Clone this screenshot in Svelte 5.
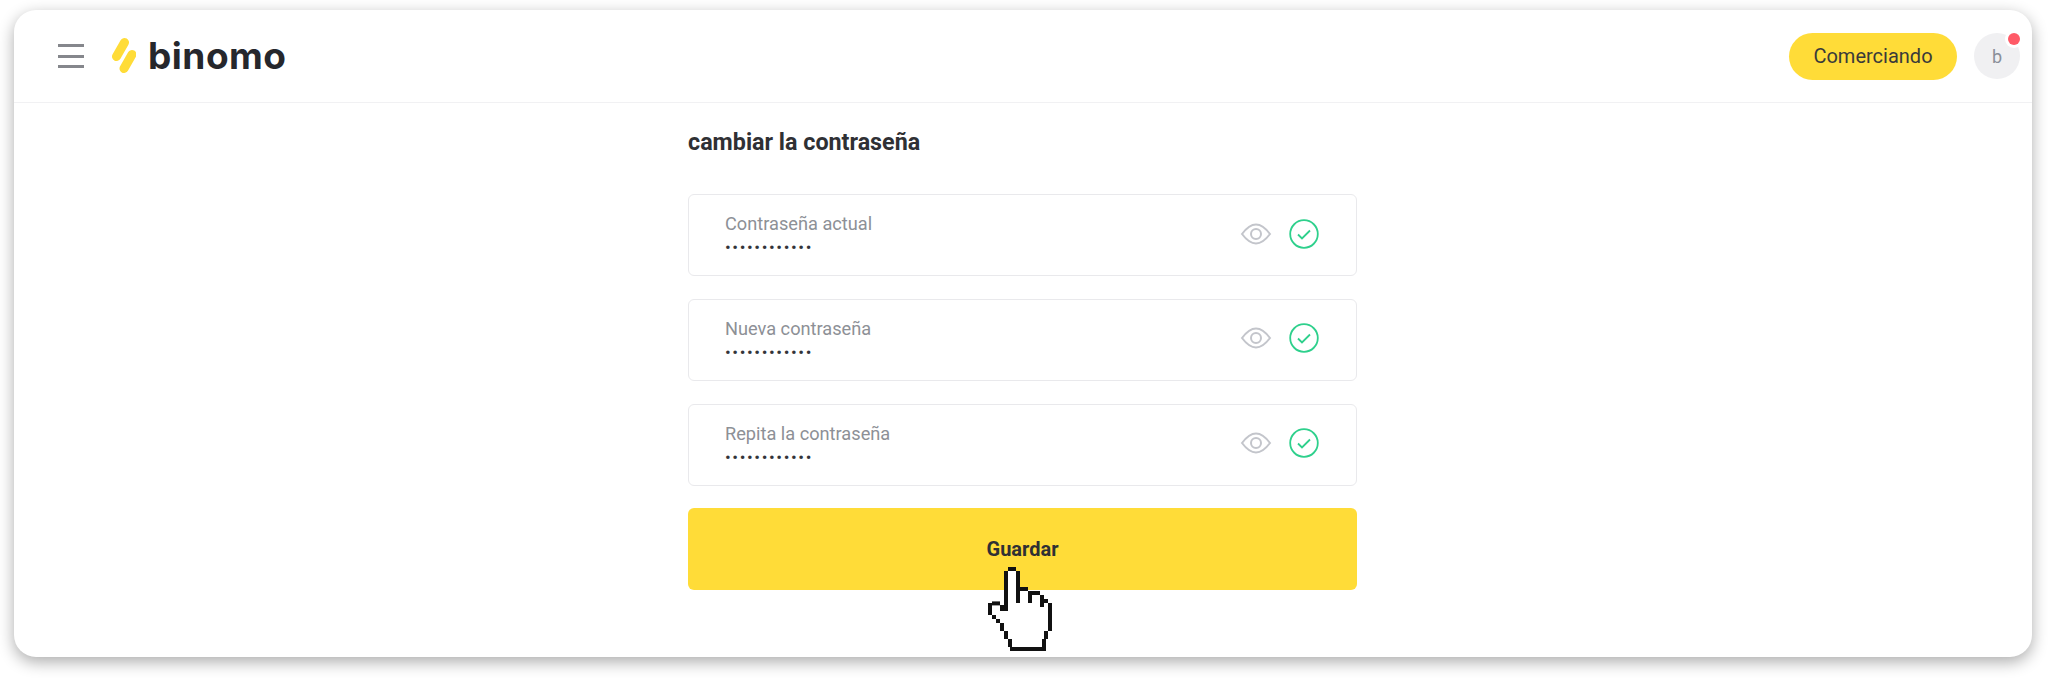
<script>
  const fields = ['Contraseña actual', 'Nueva contraseña', 'Repita la contraseña'];

  // cursor drawn on a 4px grid: [x, y, w, h]
  const cursor = [
    [5, 0, 2, 1], [4, 1, 1, 10], [7, 1, 1, 8], [8, 5, 2, 1], [10, 6, 1, 3],
    [11, 6, 2, 1], [13, 7, 1, 3], [14, 8, 1, 1], [15, 9, 1, 7], [14, 16, 1, 2],
    [13.5, 18, 1, 3], [5.5, 20, 8, 1], [5, 18, 1, 2], [4, 16, 1, 2], [3, 14, 1, 2],
    [2, 13, 1, 1], [1, 12, 1, 1], [0, 9, 1, 3], [1, 8.6, 2, 1], [3, 9.5, 1, 1.5]
  ];
</script>

<div class="page">
  <div class="card">
    <header>
      <button class="burger" aria-label="menu"><i></i><i></i><i></i></button>
      <svg class="mark" width="26" height="36" viewBox="0 0 26 36">
        <path d="M14.500 5.500 L6.500 19.500 M22 17.500 L14 31.500" stroke="#ffdc38" stroke-width="9" stroke-linecap="round" fill="none" />
      </svg>
      <span class="logo">binomo</span>
      <a class="trade" href="#trade">Comerciando</a>
      <div class="avatar">b<span class="dot"></span></div>
    </header>

    <main>
      <h1>cambiar la contraseña</h1>
      {#each fields as label}
        <div class="field">
          <div class="text">
            <span class="label">{label}</span>
            <span class="value">••••••••••••</span>
          </div>
          <svg class="eye" width="32" height="22" viewBox="0 0 32 22" fill="none" stroke="#c3c5cb" stroke-width="2">
            <path d="M2 11 C8 3 12 1.500 16 1.500 C20 1.500 24 3 30 11 C24 19 20 20.500 16 20.500 C12 20.500 8 19 2 11 Z" />
            <circle cx="16" cy="11" r="5" />
          </svg>
          <svg class="check" width="30" height="30" viewBox="0 0 30 30" fill="none" stroke="#2ed08c">
            <circle cx="15" cy="15" r="13.800" stroke-width="1.800" />
            <path d="M9 15.500 L13 19.500 L21 11.500" stroke-width="1.800" />
          </svg>
        </div>
      {/each}
      <button class="save">Guardar</button>
    </main>

    <svg class="cursor" width="64" height="84" viewBox="0 0 16 21">
      <polygon fill="#fff" points="5,1 7,1 7,5 10,5 10,6 13,6 13,8 15,8 15,16 14,16 14,18 13.500,18 13.500,20 6,20 5,18 4,16 3,14 2,13 1,12 1,9.500 3,9.500 4,11" />
      {#each cursor as [x, y, w, h]}
        <rect {x} {y} width={w} height={h} fill="#111" />
      {/each}
    </svg>
  </div>
</div>

<style>
  :global(body) { margin: 0; background: #fff; }
  .page { padding: 10px 16px 21px 14px; height: 678px; box-sizing: border-box; font-family: Roboto, sans-serif; }
  .card { position: relative; height: 647px; background: #fff; border-radius: 22px; box-shadow: 0 5px 16px rgba(0, 0, 0, .33); }

  header { display: flex; align-items: center; height: 92px; padding: 0 12px 0 44px; border-bottom: 1px solid #f1f1f3; box-sizing: content-box; }
  .burger { display: flex; flex-direction: column; gap: 7.500px; width: 26px; padding: 0; border: 0; background: none; }
  .burger i { display: block; height: 3px; background: #85878c; }
  .mark { margin-left: 26px; margin-bottom: 2px; }
  .logo { margin-left: 12px; margin-bottom: 2px; font: 700 37px Inter, sans-serif; letter-spacing: .5px; color: #26272c; line-height: 1; }
  .trade { margin-left: auto; display: flex; align-items: center; justify-content: center; width: 168px; height: 47px; border-radius: 24px; background: #ffdc38; color: #3a3a3a; font-size: 20px; text-decoration: none; }
  .avatar { position: relative; display: flex; align-items: center; justify-content: center; width: 46px; height: 46px; margin-left: 17px; border-radius: 50%; background: #f0f0f2; color: #8a8f99; font-size: 18px; }
  .dot { position: absolute; top: 0; right: 0; width: 12px; height: 12px; border-radius: 50%; background: #ff5a67; box-shadow: 0 0 0 3px #fff; }

  main { display: flex; flex-direction: column; width: 669px; margin-left: 674px; }
  h1 { margin: 25px 0 38px; font-size: 23.300px; line-height: 28px; font-weight: 700; color: #2f3034; }
  .field { display: flex; align-items: center; height: 82px; margin-bottom: 22.800px; padding: 0 37px 0 36px; border: 1px solid #e9e9ec; border-radius: 6px; box-sizing: border-box; }
  .text { display: flex; flex-direction: column; flex: 1; padding-bottom: 4px; }
  .label { font-size: 18.200px; line-height: 24px; color: #8d9096; }
  .value { margin-top: 4px; font-size: 17px; line-height: 14px; letter-spacing: 1.600px; color: #33343a; }
  .eye, .check { margin-bottom: 3px; }
  .eye { margin-right: 17px; }
  .save { height: 82px; border: 0; border-radius: 6px; background: #ffdc38; font: 700 20px Roboto, sans-serif; color: #2f3034; }
  .cursor { position: absolute; left: 974px; top: 557px; }
</style>
